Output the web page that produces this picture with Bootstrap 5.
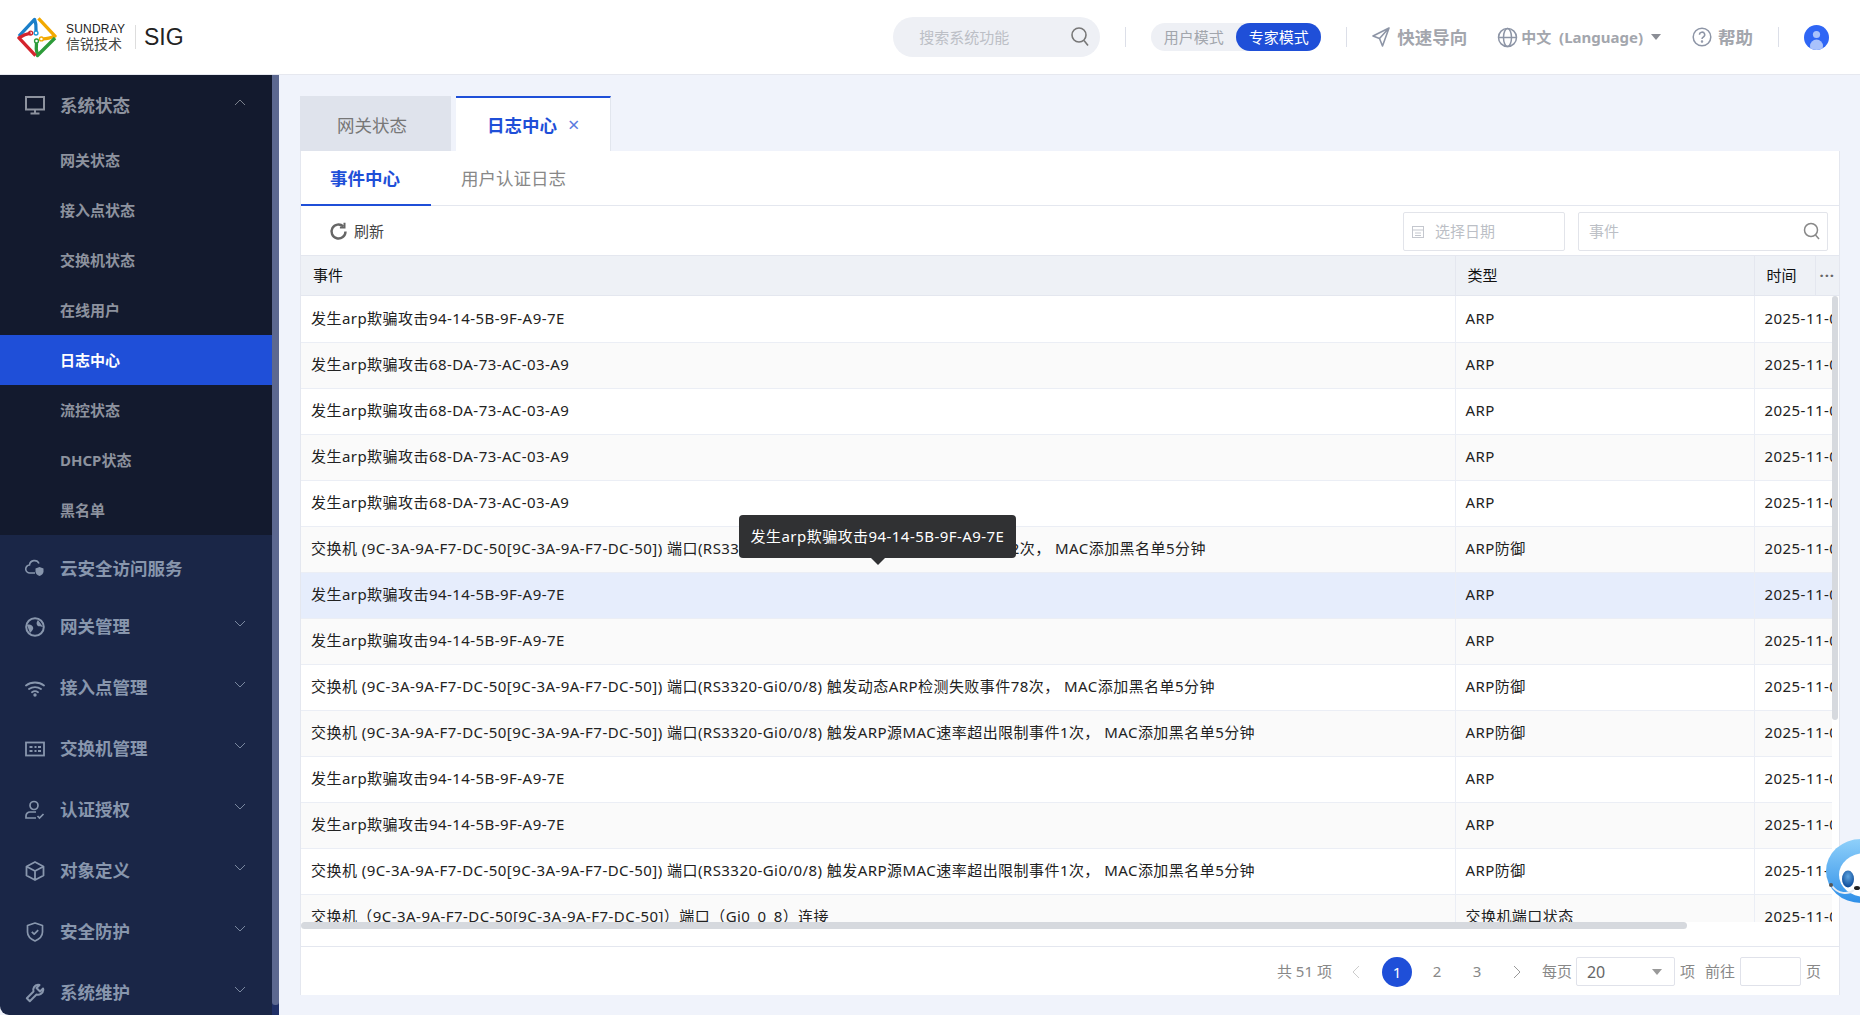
<!DOCTYPE html>
<html lang="zh-CN">
<head>
    <meta charset="UTF-8">
    <title>SIG</title>
    <link href="https://cdn.jsdelivr.net/npm/bootstrap@5.3.0/dist/css/bootstrap.min.css" rel="stylesheet">
    <style>
        html, body { height: 100%; }
        body {
            font-family: "Noto Sans", "Noto Sans CJK SC", sans-serif;
            background: #f0f3fb;
            color: #222;
            overflow: hidden;
        }
        .top-bar { height: 75px; background: #fff; border-bottom: 1px solid #e6e8ef; padding: 0 31px 0 17px; }
        .brand-mark { width: 40px; height: 42px; margin-right: 9px; }
        .brand-text { color: #333; line-height: 1; width: 60px; }
        .brand-en { font: 12px/13px "Liberation Sans", sans-serif; letter-spacing: .2px; color: #222; }
        .brand-cn { font-size: 14px; line-height: 16px; letter-spacing: 0; color: #444; white-space: nowrap; }
        .brand-sep { width: 1px; height: 24px; background: #ddd; margin: 0 8px 0 9px; }
        .brand-sig { font: 23px "Liberation Sans", sans-serif; color: #222; }
        .search-pill { width: 207px; height: 40px; background: #eef0f5; border-radius: 20px; padding: 0 10px 0 26px; color: #bcbfc6; font-size: 15px; }
        .bar-sep { width: 1px; height: 20px; background: #dcdfe8; margin: 0 25px 0 25px; }
        .mode-switch { width: 170px; height: 28px; background: #eef0f5; border-radius: 14px; font-size: 15px; color: #a2a6ad; }
        .mode-off { width: 85px; text-align: center; }
        .mode-on { width: 85px; height: 28px; line-height: 28px; text-align: center; background: #1f4fd8; color: #fff; border-radius: 14px; }
        .bar-link { color: #a3a6ad; font-weight: 700; font-size: 17.5px; }
        .guide-link { margin-left: 7px; }
        .help-link { margin-left: 6px; }
        .lang-globe { margin-left: 30px; }
        .bar-lang { color: #a3a6ad; font-weight: 700; font-size: 15px; white-space: pre; margin-left: 3px; }
        .lang-caret { width: 0; height: 0; border-left: 5px solid transparent; border-right: 5px solid transparent; border-top: 6px solid #8b8e95; margin: 0 31px 0 8px; }
        .avatar-dot { width: 25px; height: 25px; }

        .shell { height: calc(100vh - 75px); }
        .side-col { width: 279px; flex: none; background: #1a2647; border-bottom-left-radius: 9px; overflow: hidden; }
        .side-menu { width: 272px; }
        .side-open { background: #131a2e; }
        .side-head { height: 60px; padding: 0 25px; color: #8d929e; font-weight: 700; font-size: 17.5px; }
        .side-item { height: 50px; padding-left: 60px; line-height: 50px; font-size: 15px; font-weight: 700; color: #8d929e; }
        .side-item.is-on { background: #1f4fd8; color: #fff; }
        .side-group { height: 61px; padding: 0 25px; color: #8896ad; font-weight: 700; font-size: 17.5px; }
        .side-group.first-group { height: 56px; margin-top: 5px; }
        .side-ico { width: 20px; height: 20px; margin-right: 15px; flex: none; }
        .side-chev { width: 12px; height: 7px; margin-left: auto; margin-right: 1px; margin-top: -6px; }
        .side-track { width: 7px; flex: none; background: #1f2f66; }
        .side-thumb { height: 930px; background: #5c6890; border-bottom-left-radius: 3px; border-bottom-right-radius: 3px; }

        .main-col { flex: 1; min-width: 0; padding: 21px 20px 20px 21px; }
        .page-tab { height: 55px; font-size: 17.5px; }
        .page-tab.tab-off { width: 151px; background: #dfe3ec; color: #777; padding-left: 37px; line-height: 58px; }
        .page-tab.tab-on { width: 155px; margin-left: 5px; background: #fff; border-top: 2px solid #1f4fd8; border-right: 1px solid #e2e6ee; color: #1f4fd8; font-weight: 700; padding-left: 31px; line-height: 53px; }
        .tab-x { font-weight: 400; color: #5a7be0; font-size: 20px; margin-left: 11px; }
        .log-panel { background: #fff; border-left: 1px solid #e4e7ef; border-right: 1px solid #e4e7ef; height: 844px; }
        .sub-tabs { height: 55px; border-bottom: 1px solid #e4e7ef; font-size: 17.5px; }
        .sub-on { width: 130px; height: 55px; padding-left: 29px; line-height: 55px; color: #1f4fd8; font-weight: 700; border-bottom: 2px solid #1f4fd8; }
        .sub-off { margin-left: 30px; color: #888; line-height: 55px; }
        .tool-row { height: 49px; padding: 2px 11px 0 28px; font-size: 15px; color: #444; }
        .tool-label { margin-left: 6px; }
        .field-box { height: 39px; border: 1px solid #e2e4ea; border-radius: 2px; color: #bcbfc6; font-size: 15px; }
        .date-box { width: 162px; padding-left: 7px; }
        .date-label { margin-left: 10px; }
        .find-box { width: 250px; margin-left: 13px; padding: 0 6px 0 10px; }

        .ev-col { width: 1154px; }
        .kind-col { width: 299px; }
        .time-col { width: 61px; }
        .date-col { width: 79px; }
        .log-head { margin: 0; table-layout: fixed; width: 100%; font-size: 15px; }
        .log-head th { height: 40px; padding: 0 12px; font-weight: 400; color: #111; background: #eef1f6; border-top: 1px solid #e4e7ef; border-bottom: 1px solid #e4e7ef; border-right: 1px solid #e4e7ef; vertical-align: middle; white-space: nowrap; }
        .log-head th:last-child { border-right: 0; padding: 0; text-align: center; color: #666; letter-spacing: 1px; font-weight: 700; }
        .body-wrap { height: 626px; }
        .body-clip { flex: 1; min-width: 0; overflow: hidden; }
        .log-body { margin: 0; table-layout: fixed; width: 1532px; font-size: 15px; letter-spacing: .45px; }
        .log-body td { height: 46px; padding: 0 10px 2px; color: #222; border-bottom: 1px solid #ebeef5; border-right: 1px solid #ebeef5; vertical-align: middle; white-space: nowrap; background: #fff; }
        .log-body td:last-child { border-right: 0; overflow: hidden; }
        .log-body tr:nth-child(even) td { background: #fafafa; }
        .log-body tr.is-hover td { background: #e6edfc; }
        .v-track { width: 6px; flex: none; margin-right: 1px; }
        .v-thumb { height: 424px; background: #d6d9de; border-radius: 3px; }
        .h-track { height: 24px; }
        .h-thumb { width: 1386px; height: 7px; background: #d6d9de; border-radius: 4px; }
        .pager-row { height: 50px; border-top: 1px solid #e4e7ef; padding-right: 18px; font-size: 15px; color: #888; }
        .pg-cur { width: 30px; height: 30px; line-height: 30px; border-radius: 50%; background: #1f4fd8; color: #fff; text-align: center; }
        .pg-num { width: 40px; text-align: center; }
        .pg-first { margin-left: 5px; }
        .pg-chev { width: 8px; height: 14px; }
        .pg-prev { margin: 0 22px 0 20px; }
        .pg-next { margin: 0 21px 0 16px; }
        .pg-select { width: 99px; height: 29px; border: 1px solid #e0e2ea; border-radius: 2px; padding: 0 12px 0 10px; font-size: 16px; color: #666; margin: 0 5px 0 4px; }
        .pg-input { width: 61px; height: 29px; border: 1px solid #e0e2ea; border-radius: 2px; margin: 0 5px; }
        .pg-goto { margin-left: 10px; }
        .sel-caret { width: 0; height: 0; border-left: 5px solid transparent; border-right: 5px solid transparent; border-top: 6px solid #999; }

        .row-tip { position: absolute; left: 739px; top: 515px; width: 277px; height: 43px; background: #303133; border-radius: 4px; color: #fff; font-size: 15px; letter-spacing: .45px; line-height: 43px; text-align: center; white-space: nowrap; }
        .row-tip::after { content: ""; position: absolute; left: 132px; top: 43px; border-left: 7px solid transparent; border-right: 7px solid transparent; border-top: 7px solid #303133; }
        .helper-bot { position: absolute; left: 1825px; top: 838px; width: 70px; height: 66px; }
    </style>
</head>
<body>

    <header class="top-bar d-flex align-items-center justify-content-between">
        <div class="d-flex align-items-center">
            <svg class="brand-mark" viewBox="0 0 41 42" fill="none" stroke-width="3.4" stroke-linejoin="round">
                <path d="M2 20 L18 3 Q20 8 19.5 15" stroke="#1b7fc9"/>
                <path d="M22 2 L39 20 Q32 23 27 23" stroke="#f2a900"/>
                <path d="M39 22 L21 40 Q19 33 20 27" stroke="#2d9b3a"/>
                <path d="M19 40 L2 22 Q8 18 14 17" stroke="#d4242d"/>
                <circle cx="19.5" cy="17" r="2" stroke="#1b9ad6" stroke-width="1.4"/>
                <circle cx="25" cy="23" r="2" stroke="#f2a900" stroke-width="1.4"/>
                <circle cx="20" cy="25" r="2" stroke="#2d9b3a" stroke-width="1.4"/>
                <circle cx="14" cy="17" r="2" stroke="#d4242d" stroke-width="1.4"/>
            </svg>
            <div class="brand-text">
                <div class="brand-en">SUNDRAY</div>
                <div class="brand-cn">信锐技术</div>
            </div>
            <div class="brand-sep"></div>
            <div class="brand-sig">SIG</div>
        </div>
        <div class="d-flex align-items-center">
            <div class="search-pill d-flex align-items-center justify-content-between">
                <span>搜索系统功能</span>
                <svg width="20" height="22" viewBox="0 0 20 22" fill="none" stroke="#777" stroke-width="1.6"><circle cx="9" cy="9" r="7"/><path d="M14 14.500l4 5"/></svg>
            </div>
            <div class="bar-sep"></div>
            <div class="mode-switch d-flex align-items-center">
                <div class="mode-off">用户模式</div>
                <div class="mode-on">专家模式</div>
            </div>
            <div class="bar-sep"></div>
            <svg width="18" height="20" viewBox="0 0 18 20" fill="none" stroke="#8d95a6" stroke-width="1.6" stroke-linejoin="round"><path d="M17 1 L1 9 L7.500 11.500 L10.500 19 Z M17 1 L7.500 11.500"/></svg>
            <span class="bar-link guide-link">快速导向</span>
            <svg class="lang-globe" width="21" height="21" viewBox="0 0 21 21" fill="none" stroke="#8d95a6" stroke-width="1.5"><circle cx="10.5" cy="10.5" r="9"/><ellipse cx="10.5" cy="10.5" rx="4" ry="9"/><path d="M1.500 10.500h18"/></svg>
            <span class="bar-lang">中文  (Language)</span>
            <span class="lang-caret"></span>
            <svg width="20" height="20" viewBox="0 0 20 20" fill="none" stroke="#8d95a6" stroke-width="1.5"><circle cx="10" cy="10" r="8.800"/><path d="M7.500 7.800a2.600 2.600 0 1 1 3.900 2.200c-.9.500-1.400 1-1.400 2"/><circle cx="10" cy="14.600" r=".5"/></svg>
            <span class="bar-link help-link">帮助</span>
            <div class="bar-sep"></div>
            <svg class="avatar-dot" viewBox="0 0 25 25"><defs><clipPath id="avatarClip"><circle cx="12.500" cy="12.500" r="12.500"/></clipPath></defs><circle cx="12.500" cy="12.500" r="12.500" fill="#2f66f5"/><g clip-path="url(#avatarClip)"><circle cx="12.500" cy="9.500" r="3.600" fill="#a9c2fb"/><ellipse cx="12.500" cy="21" rx="6.500" ry="6.500" fill="#a9c2fb"/></g></svg>
        </div>
    </header>

    <div class="shell d-flex">
        <aside class="side-col d-flex">
            <nav class="side-menu">
                <div class="side-open">
                    <div class="side-head d-flex align-items-center">
                        <svg class="side-ico" viewBox="0 0 20 20" fill="none" stroke="#8d929e" stroke-width="2"><rect x="1" y="2" width="18" height="12.500"/><path d="M10 15v3M5.500 18.500h9"/></svg>
                        系统状态
                        <svg class="side-chev" viewBox="0 0 12 7" fill="none" stroke="#7a808c" stroke-width="1"><path d="M1 6l5-5 5 5"/></svg>
                    </div>
                    <div class="side-item">网关状态</div>
                    <div class="side-item">接入点状态</div>
                    <div class="side-item">交换机状态</div>
                    <div class="side-item">在线用户</div>
                    <div class="side-item is-on">日志中心</div>
                    <div class="side-item">流控状态</div>
                    <div class="side-item">DHCP状态</div>
                    <div class="side-item">黑名单</div>
                </div>
                <div class="side-group first-group d-flex align-items-center">
                    <svg class="side-ico" viewBox="0 0 20 20" fill="none" stroke="#8896ad" stroke-width="1.600"><path d="M10 15H5a4 4 0 0 1-.5-8A5 5 0 0 1 14 5.500"/><path d="M14.500 9l4 1.400v3c0 2.200-1.700 3.600-4 4.600-2.300-1-4-2.400-4-4.600v-3z" fill="#8896ad" stroke="none"/></svg>
                    云安全访问服务
                </div>
                <div class="side-group d-flex align-items-center">
                    <svg class="side-ico" viewBox="0 0 20 20"><circle cx="10" cy="10" r="8.800" fill="none" stroke="#8896ad" stroke-width="2"/><path d="M2 8c3-1 5 0 6 2s-1 4-3 6M18 10c-3-1-5 0-6-2s0-4 1-5" fill="#8896ad"/></svg>
                    网关管理
                    <svg class="side-chev" viewBox="0 0 12 7" fill="none" stroke="#7a88a0" stroke-width="1"><path d="M1 1l5 5 5-5"/></svg>
                </div>
                <div class="side-group d-flex align-items-center">
                    <svg class="side-ico" viewBox="0 0 20 20" fill="none" stroke="#8896ad" stroke-width="1.800" stroke-linecap="round"><path d="M1 7.500c5-4 13-4 18 0M4 11c3.500-2.600 8.500-2.600 12 0M7 14.200c1.800-1.300 4.200-1.300 6 0"/><circle cx="10" cy="17" r=".8"/></svg>
                    接入点管理
                    <svg class="side-chev" viewBox="0 0 12 7" fill="none" stroke="#7a88a0" stroke-width="1"><path d="M1 1l5 5 5-5"/></svg>
                </div>
                <div class="side-group d-flex align-items-center">
                    <svg class="side-ico" viewBox="0 0 20 20" fill="none" stroke="#8896ad" stroke-width="1.800"><rect x="1" y="3.500" width="18" height="13"/><path d="M4.500 8h3M4.500 12h3M9.500 8h2M9.500 12h2M13 8h3M13 12h3" stroke-width="2"/></svg>
                    交换机管理
                    <svg class="side-chev" viewBox="0 0 12 7" fill="none" stroke="#7a88a0" stroke-width="1"><path d="M1 1l5 5 5-5"/></svg>
                </div>
                <div class="side-group d-flex align-items-center">
                    <svg class="side-ico" viewBox="0 0 20 20" fill="none" stroke="#8896ad" stroke-width="1.700"><circle cx="9" cy="5.500" r="4"/><path d="M11 12H5a4 4 0 0 0-4 4v2h10M12.500 16l2 2 4-4"/></svg>
                    认证授权
                    <svg class="side-chev" viewBox="0 0 12 7" fill="none" stroke="#7a88a0" stroke-width="1"><path d="M1 1l5 5 5-5"/></svg>
                </div>
                <div class="side-group d-flex align-items-center">
                    <svg class="side-ico" viewBox="0 0 20 20" fill="none" stroke="#8896ad" stroke-width="1.800" stroke-linejoin="round"><path d="M10 1l8.500 4.500v9L10 19l-8.500-4.500v-9zM1.500 5.500L10 10l8.500-4.500M10 10v9"/></svg>
                    对象定义
                    <svg class="side-chev" viewBox="0 0 12 7" fill="none" stroke="#7a88a0" stroke-width="1"><path d="M1 1l5 5 5-5"/></svg>
                </div>
                <div class="side-group d-flex align-items-center">
                    <svg class="side-ico" viewBox="0 0 20 20" fill="none" stroke="#8896ad" stroke-width="1.700" stroke-linejoin="round"><path d="M10 1l7.500 2.500v6.500c0 4-3 7-7.500 9-4.500-2-7.500-5-7.500-9V3.500zM6.800 9.800l2.400 2.400 4-4"/></svg>
                    安全防护
                    <svg class="side-chev" viewBox="0 0 12 7" fill="none" stroke="#7a88a0" stroke-width="1"><path d="M1 1l5 5 5-5"/></svg>
                </div>
                <div class="side-group d-flex align-items-center">
                    <svg class="side-ico" viewBox="0 0 20 20" fill="none" stroke="#8896ad" stroke-width="2" stroke-linejoin="round"><path d="M8.500 8.500L1.800 15.200 4.800 18.200 11.500 11.500c3 1 6.500-1 6.800-4.500 0-.6 0-1-.2-1.500L15 8.500 11.500 5l3-3c-.5-.2-1-.2-1.500-.2C9.500 2 7.500 5.500 8.500 8.500z"/></svg>
                    系统维护
                    <svg class="side-chev" viewBox="0 0 12 7" fill="none" stroke="#7a88a0" stroke-width="1"><path d="M1 1l5 5 5-5"/></svg>
                </div>
            </nav>
            <div class="side-track"><div class="side-thumb"></div></div>
        </aside>

        <main class="main-col">
            <div class="d-flex">
                <div class="page-tab tab-off">网关状态</div>
                <div class="page-tab tab-on">日志中心<span class="tab-x">×</span></div>
            </div>
            <section class="log-panel">
                <div class="sub-tabs d-flex">
                    <div class="sub-on">事件中心</div>
                    <div class="sub-off">用户认证日志</div>
                </div>
                <div class="tool-row d-flex align-items-center">
                    <svg width="19" height="19" viewBox="0 0 19 19" fill="none" stroke="#666" stroke-width="2.400"><path d="M16.500 9.500a7 7 0 1 1-2.200-5.100"/><path d="M15.500 0.800v4.600h-4.600" stroke-width="2"/></svg>
                    <span class="tool-label">刷新</span>
                    <div class="field-box date-box d-flex align-items-center ms-auto">
                        <svg width="14" height="14" viewBox="0 0 14 14" fill="none" stroke="#c4c7ce" stroke-width="1"><rect x="1.500" y="1.500" width="11" height="11"/><path d="M1.500 5h11M4 8h6M4 10.500h6"/></svg>
                        <span class="date-label">选择日期</span>
                    </div>
                    <div class="field-box find-box d-flex align-items-center justify-content-between">
                        <span>事件</span>
                        <svg width="18" height="19" viewBox="0 0 18 19" fill="none" stroke="#888" stroke-width="1.500"><circle cx="8" cy="8" r="6.500"/><path d="M12.500 13l3.500 4"/></svg>
                    </div>
                </div>

                <table class="log-head">
                    <colgroup><col class="ev-col"><col class="kind-col"><col class="time-col"><col></colgroup>
                    <thead><tr><th>事件</th><th>类型</th><th>时间</th><th>···</th></tr></thead>
                </table>
                <div class="body-wrap d-flex">
                    <div class="body-clip">
                        <table class="log-body">
                            <colgroup><col class="ev-col"><col class="kind-col"><col class="date-col"></colgroup>
                            <tbody>
                                <tr><td>发生arp欺骗攻击94-14-5B-9F-A9-7E</td><td>ARP</td><td>2025-11-06</td></tr>
                                <tr><td>发生arp欺骗攻击68-DA-73-AC-03-A9</td><td>ARP</td><td>2025-11-06</td></tr>
                                <tr><td>发生arp欺骗攻击68-DA-73-AC-03-A9</td><td>ARP</td><td>2025-11-06</td></tr>
                                <tr><td>发生arp欺骗攻击68-DA-73-AC-03-A9</td><td>ARP</td><td>2025-11-06</td></tr>
                                <tr><td>发生arp欺骗攻击68-DA-73-AC-03-A9</td><td>ARP</td><td>2025-11-06</td></tr>
                                <tr><td>交换机 (9C-3A-9A-F7-DC-50[9C-3A-9A-F7-DC-50]) 端口(RS3320-Gi0/0/8) 触发动态ARP检测失败事件2次， MAC添加黑名单5分钟</td><td>ARP防御</td><td>2025-11-06</td></tr>
                                <tr class="is-hover"><td>发生arp欺骗攻击94-14-5B-9F-A9-7E</td><td>ARP</td><td>2025-11-06</td></tr>
                                <tr><td>发生arp欺骗攻击94-14-5B-9F-A9-7E</td><td>ARP</td><td>2025-11-06</td></tr>
                                <tr><td>交换机 (9C-3A-9A-F7-DC-50[9C-3A-9A-F7-DC-50]) 端口(RS3320-Gi0/0/8) 触发动态ARP检测失败事件78次， MAC添加黑名单5分钟</td><td>ARP防御</td><td>2025-11-06</td></tr>
                                <tr><td>交换机 (9C-3A-9A-F7-DC-50[9C-3A-9A-F7-DC-50]) 端口(RS3320-Gi0/0/8) 触发ARP源MAC速率超出限制事件1次， MAC添加黑名单5分钟</td><td>ARP防御</td><td>2025-11-06</td></tr>
                                <tr><td>发生arp欺骗攻击94-14-5B-9F-A9-7E</td><td>ARP</td><td>2025-11-06</td></tr>
                                <tr><td>发生arp欺骗攻击94-14-5B-9F-A9-7E</td><td>ARP</td><td>2025-11-06</td></tr>
                                <tr><td>交换机 (9C-3A-9A-F7-DC-50[9C-3A-9A-F7-DC-50]) 端口(RS3320-Gi0/0/8) 触发ARP源MAC速率超出限制事件1次， MAC添加黑名单5分钟</td><td>ARP防御</td><td>2025-11-06</td></tr>
                                <tr><td>交换机（9C-3A-9A-F7-DC-50[9C-3A-9A-F7-DC-50]）端口（Gi0_0_8）连接</td><td>交换机端口状态</td><td>2025-11-06</td></tr>
                            </tbody>
                        </table>
                    </div>
                    <div class="v-track"><div class="v-thumb"></div></div>
                </div>
                <div class="h-track"><div class="h-thumb"></div></div>
                <div class="pager-row d-flex align-items-center justify-content-end">
                    <span>共 51 项</span>
                    <svg class="pg-chev pg-prev" viewBox="0 0 8 14" fill="none" stroke="#ccc" stroke-width="1"><path d="M7 1L1 7l6 6"/></svg>
                    <span class="pg-cur">1</span>
                    <span class="pg-num pg-first">2</span>
                    <span class="pg-num">3</span>
                    <svg class="pg-chev pg-next" viewBox="0 0 8 14" fill="none" stroke="#999" stroke-width="1"><path d="M1 1l6 6-6 6"/></svg>
                    <span>每页</span>
                    <div class="pg-select d-flex align-items-center justify-content-between"><span>20</span><span class="sel-caret"></span></div>
                    <span>项</span>
                    <span class="pg-goto">前往</span>
                    <div class="pg-input"></div>
                    <span>页</span>
                </div>
            </section>
        </main>
    </div>

    <div class="row-tip">发生arp欺骗攻击94-14-5B-9F-A9-7E</div>

    <svg class="helper-bot" viewBox="0 0 70 66">
        <defs>
            <linearGradient id="botRing" x1="0" y1="0" x2="0" y2="1"><stop offset="0" stop-color="#8fd0fa"/><stop offset="1" stop-color="#2f8fe8"/></linearGradient>
            <radialGradient id="botEye" cx=".5" cy=".35" r=".6"><stop offset="0" stop-color="#5fa5e0"/><stop offset="1" stop-color="#114f9c"/></radialGradient>
        </defs>
        <ellipse cx="36" cy="33" rx="35" ry="32" fill="url(#botRing)"/>
        <ellipse cx="40" cy="37" rx="26" ry="22" fill="#fff"/>
        <ellipse cx="23" cy="41" rx="6" ry="8.500" fill="url(#botEye)"/>
        <ellipse cx="32" cy="50" rx="3" ry="2" fill="#222"/>
        <path d="M7 48c6 8 16 9 22 4" fill="none" stroke="#e6ecf4" stroke-width="2"/>
        <circle cx="6" cy="47" r="2" fill="#555"/>
    </svg>

    <script src="https://cdn.jsdelivr.net/npm/bootstrap@5.3.0/dist/js/bootstrap.bundle.min.js"></script>
</body>
</html>
